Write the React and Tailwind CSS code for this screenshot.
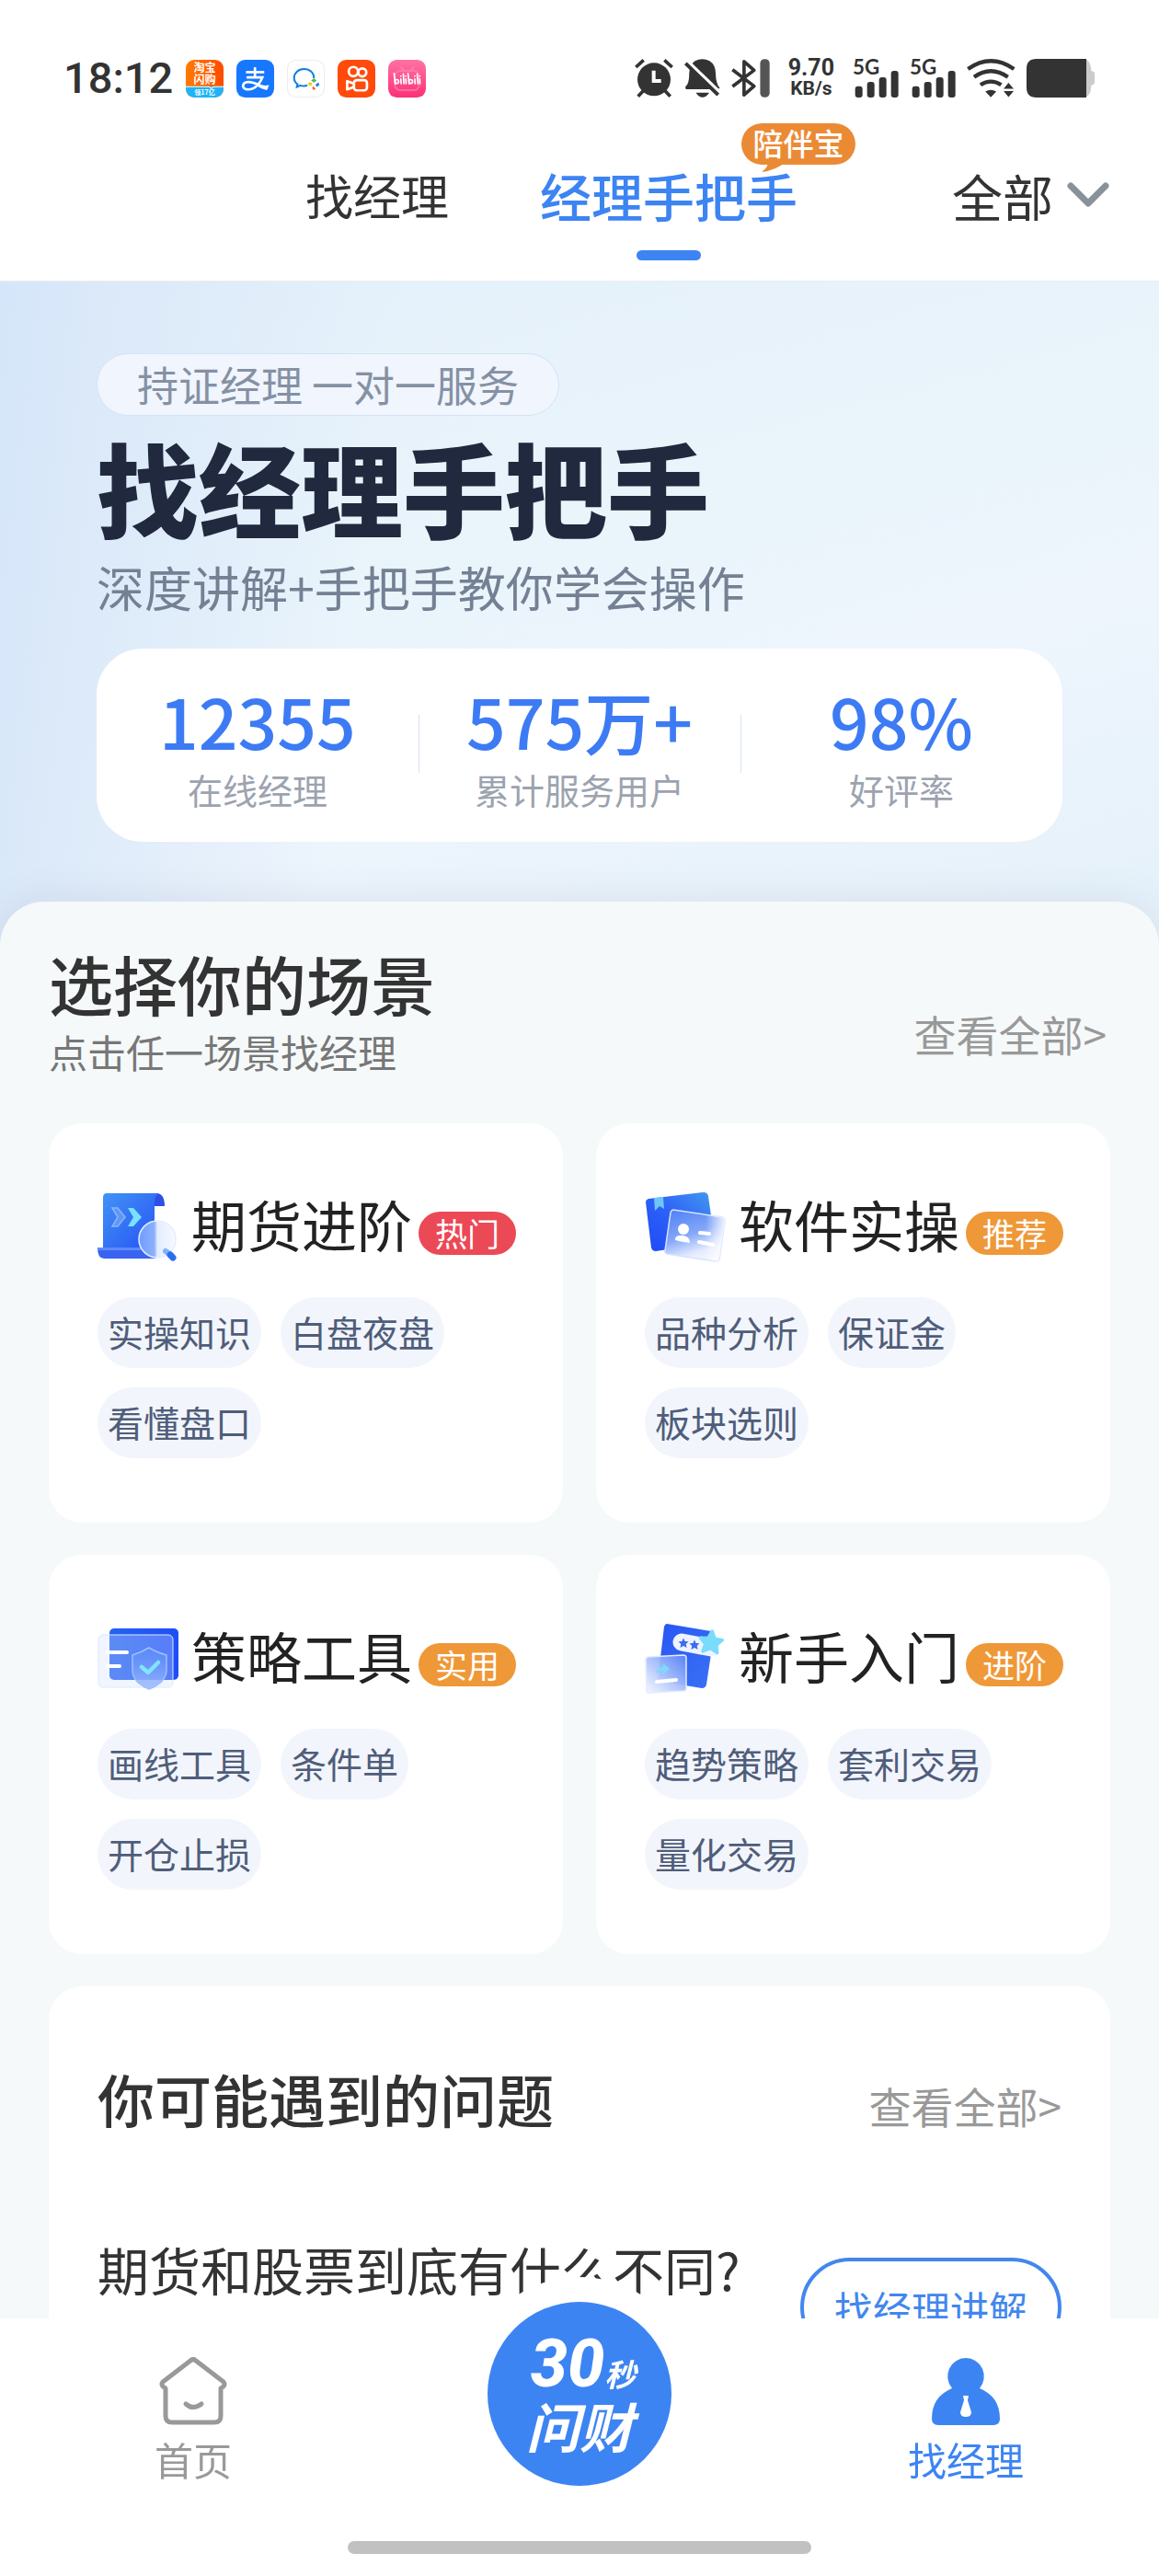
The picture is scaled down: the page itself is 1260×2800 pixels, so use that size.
import React from "react";

const DARK = "#333333";
const BLUE = "#3d84f3";

/* ---------- status bar ---------- */

function TaobaoIcon() {
  return (
    <svg viewBox="0 0 122 122" className="size-[41px]" aria-label="淘宝闪购">
      <defs>
        <linearGradient id="tb" x1="0" x2="1">
          <stop offset="0" stopColor="#ff7a00" />
          <stop offset="1" stopColor="#ff4a00" />
        </linearGradient>
        <clipPath id="tbc">
          <rect width="122" height="122" rx="28" />
        </clipPath>
      </defs>
      <g clipPath="url(#tbc)">
        <rect width="122" height="122" fill="url(#tb)" />
        <rect y="86" width="122" height="36" fill="#1fb4f8" />
        <path d="M0 87H76l7 6 7-6H122" stroke="#fff" strokeWidth="3" fill="none" />
      </g>
      <g fill="#fff" fontFamily="Noto Sans CJK SC, sans-serif" fontWeight="700" textAnchor="middle">
        <text x="61" y="40" fontSize="36">淘宝</text>
        <text x="61" y="76" fontSize="36">闪购</text>
        <text x="61" y="113" fontSize="21">领17亿</text>
      </g>
    </svg>
  );
}

function AlipayIcon() {
  return (
    <svg viewBox="0 0 122 122" className="size-[41px]" aria-label="支付宝">
      <rect width="122" height="122" rx="28" fill="#1677ff" />
      <g fill="none" stroke="#fff" strokeLinecap="round">
        <path d="M31 40H90" strokeWidth="8" strokeLinecap="butt" />
        <path d="M60 24V58" strokeWidth="8" strokeLinecap="butt" />
        <path d="M36 57H84C78 74 62 96 38 96C14 96 18 73 38 72C60 71 76 86 98 92" strokeWidth="8" />
      </g>
      <path d="M66 76Q84 86 106 82L98 98Q82 96 66 84Z" fill="#fff" />
    </svg>
  );
}

function WeComIcon() {
  return (
    <svg viewBox="0 0 122 122" className="size-[41px]" aria-label="企业微信">
      <rect x="1.5" y="1.5" width="119" height="119" rx="27" fill="#fff" stroke="#ececec" strokeWidth="3" />
      <path d="M87 60C88 41 73 30 55 30C36 30 23 43 23 59C23 68 28 75 34 79L32 88L43 83C53 86 60 85 66 82" fill="none" stroke="#0d7fe0" strokeWidth="6" />
      <path d="M87 60l9 7-9 7-9-7z" fill="#4fb848" />
      <path d="M102 73l3 9-9 6-4-8z" fill="#1485ee" />
      <path d="M87 86l6 10-9 1-3-8z" fill="#f4622c" />
      <path d="M74 72l8 4-4 9-12-6z" fill="#f9c41f" />
    </svg>
  );
}

function KuaishouIcon() {
  return (
    <svg viewBox="0 0 122 122" className="size-[41px]" aria-label="快手">
      <rect width="122" height="122" rx="28" fill="#ff4a0c" />
      <g fill="none" stroke="#fff" strokeWidth="8" strokeLinejoin="round">
        <circle cx="51" cy="38" r="15" />
        <circle cx="80" cy="41" r="13" />
        <rect x="53" y="66" width="42" height="33" rx="9" />
        <path d="M53 77L31 69V96L53 88" />
      </g>
    </svg>
  );
}

function BilibiliIcon() {
  return (
    <svg viewBox="0 0 122 122" className="size-[41px]" aria-label="bilibili">
      <defs>
        <linearGradient id="bl" x2="0" y2="1">
          <stop offset="0" stopColor="#ff72a3" />
          <stop offset="1" stopColor="#fc3177" />
        </linearGradient>
      </defs>
      <rect width="122" height="122" rx="28" fill="url(#bl)" />
      <g fill="none" stroke="#ff8bb4" strokeWidth="6" opacity=".6" strokeLinecap="round">
        <rect x="22" y="36" width="78" height="62" rx="16" />
        <path d="M42 24l10 11M82 24L72 35" />
      </g>
      <g fill="none" stroke="#fff" strokeWidth="5" strokeLinecap="round">
        <path d="M19 44l4 34M64 44l4 34" />
        <circle cx="28" cy="70" r="6" />
        <circle cx="73" cy="70" r="6" />
        <path d="M41 62l1 15M49 46l2 31M57 62l1 15M86 62l1 15M94 46l2 31M102 62l1 15M41 52v1M57 52v1M86 52v1M102 52v1" />
      </g>
    </svg>
  );
}

function AlarmIcon() {
  return (
    <svg viewBox="30 42 126 126" className="size-[42px]" aria-label="闹钟">
      <g stroke={DARK} strokeWidth="11">
        <path d="M34 69L59 46M152 69L127 46M41 164L60 144M146 164L127 144" />
      </g>
      <circle cx="93" cy="109" r="54" fill={DARK} />
      <path d="M92 80V114H116" fill="none" stroke="#fff" strokeWidth="12" />
    </svg>
  );
}

function BellOffIcon() {
  return (
    <svg viewBox="195 42 118 126" className="h-[42px] w-[39px]" aria-label="静音">
      <path d="M202 141Q196 139 200 131Q211 122 211 88Q212 60 230 48Q254 36 278 48Q297 60 298 88Q298 122 312 138L300 141Z" fill={DARK} />
      <path d="M233 153H277Q267 168 255 168Q242 168 233 153Z" fill={DARK} />
      <path d="M203 48L313 154" stroke="#fff" strokeWidth="13" />
      <path d="M199 56L306 160" stroke={DARK} strokeWidth="12" />
    </svg>
  );
}

function BluetoothIcon() {
  return (
    <svg viewBox="345 42 127 126" className="h-[42px] w-[42px]" aria-label="蓝牙">
      <path d="M349 77L420 131L387 160V50L420 79L349 132" fill="none" stroke={DARK} strokeWidth="11" strokeLinejoin="round" />
      <rect x="440" y="42" width="31" height="126" rx="14" fill="#555" />
    </svg>
  );
}

function SignalIcon() {
  return (
    <svg viewBox="740 42 150 126" className="h-[42px] w-[50px] overflow-visible" aria-label="5G">
      <text x="740" y="92" fontSize="67" fontWeight="700" fontFamily="Lato, sans-serif" fill={DARK}>5G</text>
      <g fill={DARK}>
        <rect x="748" y="131" width="24" height="37" rx="9" />
        <rect x="787" y="117" width="24" height="51" rx="9" />
        <rect x="826" y="102" width="24" height="66" rx="9" />
        <rect x="865" y="81" width="24" height="87" rx="9" />
      </g>
    </svg>
  );
}

function WifiIcon() {
  return (
    <svg viewBox="1116 42 160 126" className="h-[42px] w-[53px]" aria-label="Wi-Fi">
      <g fill="none" stroke={DARK} strokeWidth="13">
        <path d="M1120 75Q1195 22 1271 75" />
        <path d="M1140 101Q1195 62 1251 101" />
        <path d="M1161 127Q1195 105 1229 127" />
      </g>
      <path d="M1177 149Q1195 138 1213 149L1195 168Z" fill={DARK} />
      <path d="M1237 140L1253 120L1270 140ZM1237 147H1270L1253 167Z" fill={DARK} />
    </svg>
  );
}

function BatteryIcon() {
  return (
    <svg viewBox="1308 42 222 126" className="h-[42px] w-[74px]" aria-label="电量">
      <path d="M1490 42Q1518 42 1519 82Q1530 82 1530 92V118Q1530 127 1519 128Q1518 168 1490 168Z" fill="#cbcbcb" />
      <path d="M1340 42H1503V168H1340Q1308 168 1308 136V74Q1308 42 1340 42Z" fill={DARK} />
    </svg>
  );
}

function StatusBar() {
  return (
    <div className="flex h-[42px] items-center pr-[70px] pl-[69px] text-[#333]">
      <time className="w-[133px] font-[Roboto] text-[47px] leading-[48px] font-medium">18:12</time>
      <div className="flex gap-[14px]">
        <TaobaoIcon />
        <AlipayIcon />
        <WeComIcon />
        <KuaishouIcon />
        <BilibiliIcon />
      </div>
      <div className="ml-auto flex gap-3">
        <AlarmIcon />
        <BellOffIcon />
        <BluetoothIcon />
        <div className="mx-2 flex h-[42px] flex-col items-center justify-center font-[Roboto] text-[25px] leading-[23px] font-bold">
          <span>9.70</span>
          <span className="text-[21px]">KB/s</span>
        </div>
        <SignalIcon />
        <SignalIcon />
        <WifiIcon />
        <BatteryIcon />
      </div>
    </div>
  );
}

/* ---------- header ---------- */

function Header() {
  return (
    <header className="shrink-0 border-b border-[#ebedf0] bg-white pt-16">
      <StatusBar />
      <div className="flex items-start pt-[78px] pr-[54px] pb-[22px] pl-[332px] leading-[56px]">
        <button type="button" className="text-[52px] text-[#333]">找经理</button>
        <button type="button" className="relative ml-[99px] flex flex-col items-center text-[56px] font-medium text-[#3d84f3]">
          经理手把手
          <span className="mt-8 h-[11px] w-[70px] rounded-full bg-[#3d84f3]" />
          <span className="absolute -top-[50px] left-[219px] h-[45px] w-[124px] rounded-full bg-[#eb8a35] text-center text-[33px] leading-[42px] text-white">
            陪伴宝
            <svg viewBox="0 0 28 12" className="absolute top-[42px] left-5 h-3 w-7" aria-hidden="true">
              <path d="M9 0H28Q18 9 2 11Q9 6 9 0Z" fill="#eb8a35" />
            </svg>
          </span>
        </button>
        <label className="ml-auto flex items-center gap-[14px] text-[55px] text-[#333]">
          <select aria-label="筛选" className="h-[56px] appearance-none bg-transparent">
            <option>全部</option>
          </select>
          <svg viewBox="0 0 46 28" className="h-7 w-[46px]" aria-hidden="true">
            <path d="M4 4L23 23L42 4" fill="none" stroke="#8b919a" strokeWidth="7" strokeLinecap="round" strokeLinejoin="round" />
          </svg>
        </label>
      </div>
    </header>
  );
}

/* ---------- hero ---------- */

const stats = [
  ["12355", "在线经理"],
  ["575万+", "累计服务用户"],
  ["98%", "好评率"],
];

function Hero() {
  return (
    <section className="bg-[linear-gradient(97deg,#d5e6fa_0%,#dbe9f9_8%,rgba(232,243,251,0)_32%),linear-gradient(165deg,#e4f0fa_0%,#e9f4fb_40%,#eef5fd_62%,#e4f1fa_100%)] px-[105px] pt-[78px] pb-[113px]">
      <p className="inline-block rounded-full border border-[#d5e4f3] bg-[#f0f5fe] px-[43px] text-[45px] leading-[66px] text-[#8591a3]">
        持证经理 一对一服务
      </p>
      <h1 className="mt-[22px] text-[111px] leading-[110px] font-black text-[#20293d]">找经理手把手</h1>
      <p className="mt-7 text-[52px] leading-[52px] text-[#748093]">深度讲解+手把手教你学会操作</p>
      <dl className="mt-[41px] grid grid-cols-3 rounded-[50px] bg-white pt-10 pb-[38px] text-center">
        {stats.map(([value, label], i) => (
          <div key={label} className="relative flex flex-col-reverse">
            {i > 0 && <span className="absolute top-8 left-0 h-[63px] w-px bg-[#d8e3ee]" />}
            <dt className="mt-[18px] text-[38px] leading-[38px] text-[#9ca3af]">{label}</dt>
            <dd className="text-[75px] leading-[76px] font-medium text-[#3d7bf5]">{value}</dd>
          </div>
        ))}
      </dl>
    </section>
  );
}

/* ---------- scene icons ---------- */

function ScrollIcon() {
  return (
    <svg viewBox="0 0 88 76" className="h-[76px] w-[88px] shrink-0" aria-hidden="true">
      <defs>
        <linearGradient id="s1" x1="0" y1="0" x2="1" y2="1">
          <stop offset="0" stopColor="#4393f5" />
          <stop offset="1" stopColor="#2450f5" />
        </linearGradient>
        <linearGradient id="s2" x1="0" x2="1">
          <stop offset="0" stopColor="#6f9dfb" />
          <stop offset=".42" stopColor="#8cb0fc" />
          <stop offset=".5" stopColor="#e3edff" />
          <stop offset="1" stopColor="#f7faff" />
        </linearGradient>
      </defs>
      <path d="M60 1H65Q73 2 73 15H62Z" fill="#2c4fe6" />
      <path d="M10 1H66Q62 5 62 12V64H6V6Q6 1 10 1Z" fill="url(#s1)" />
      <path d="M0 60H56Q58 68 64 72H7Q0 72 0 60Z" fill="#3a63f2" />
      <path d="M0 60H56L57 63H0Z" fill="#5d8afb" />
      <path d="M16 17H22L30 27L22 37H16L22 27Z" fill="#5f97f8" stroke="#8bb4fb" strokeWidth="1.5" />
      <path d="M33 17H39L48 27L39 37H33L39 27Z" fill="#78e2fd" />
      <circle cx="65" cy="51" r="20" fill="url(#s2)" stroke="#e6eeff" strokeWidth="1.5" />
      <path d="M74 64L80 68" stroke="#7fb2f8" strokeWidth="6" strokeLinecap="round" />
      <path d="M79 68L82 71" stroke="#2c6df0" strokeWidth="7" strokeLinecap="round" />
    </svg>
  );
}

function CardsIcon() {
  return (
    <svg viewBox="0 0 88 76" className="h-[76px] w-[88px] shrink-0" aria-hidden="true">
      <defs>
        <linearGradient id="c1" x1="0" y1="1" x2="1" y2="0">
          <stop offset="0" stopColor="#2049f6" />
          <stop offset=".5" stopColor="#2c62f7" />
          <stop offset="1" stopColor="#469af0" />
        </linearGradient>
        <linearGradient id="c2" x1=".3" y1="0" x2=".7" y2="1">
          <stop offset="0" stopColor="#5486f5" />
          <stop offset=".45" stopColor="#85a7f9" />
          <stop offset=".8" stopColor="#e5ecff" />
          <stop offset="1" stopColor="#f7f9ff" />
        </linearGradient>
        <linearGradient id="c3" x1="0" x2="1">
          <stop offset=".68" stopColor="#fff" stopOpacity="0" />
          <stop offset="1" stopColor="#fff" stopOpacity=".85" />
        </linearGradient>
      </defs>
      <path d="M4 7L64 0Q68 0 69 4L76 54L12 64Q8 64 7 60L1 11Q1 8 4 7Z" fill="url(#c1)" />
      <path d="M10 6L20 5L21 18L16 15L11 20Z" fill="#6cc6f5" />
      <path d="M31 19L84 27Q87 28 87 31L81 73Q80 75 77 75L24 67Q21 66 22 63L28 22Q29 19 31 19Z" fill="url(#c2)" stroke="#d6e2ff" strokeWidth="1.5" />
      <path d="M31 19L84 27Q87 28 87 31L81 73Q80 75 77 75L24 67Q21 66 22 63L28 22Q29 19 31 19Z" fill="url(#c3)" />
      <circle cx="42" cy="40" r="6" fill="#fff" />
      <path d="M33 50Q35 46 42 47Q49 48 49 55Q40 54 33 52Z" fill="#fff" />
      <path d="M60 44L70 45M59 54L74 57" stroke="#fff" strokeWidth="4" strokeLinecap="round" />
    </svg>
  );
}

function ShieldIcon() {
  return (
    <svg viewBox="0 -5 88 76" className="h-[76px] w-[88px] shrink-0" aria-hidden="true">
      <defs>
        <linearGradient id="h1" x1="0" x2="1">
          <stop offset="0" stopColor="#2563f0" />
          <stop offset="1" stopColor="#1f4df8" />
        </linearGradient>
        <linearGradient id="h2" y1="0" x2="0" y2="1">
          <stop offset="0" stopColor="#5c8ff8" stopOpacity=".5" />
          <stop offset="1" stopColor="#9bb9ff" stopOpacity=".9" />
        </linearGradient>
      </defs>
      <rect x="13" width="75" height="56" rx="5" fill="url(#h1)" />
      <rect x="1" y="7" width="81" height="57" rx="5" fill="#cfdfff" fillOpacity=".32" stroke="#dce8ff" />
      <path d="M56 21Q64 26 75 29V47Q74 59 56 66Q39 59 38 47V29Q48 26 56 21Z" fill="url(#h2)" stroke="#9cc0fc" strokeWidth="1.5" />
      <path d="M11 26H32M11 41H24" stroke="#fff" strokeWidth="4" strokeLinecap="round" />
      <path d="M48 42L55 48L66 37" fill="none" stroke="#7fe5ff" strokeWidth="4.5" strokeLinecap="round" strokeLinejoin="round" />
    </svg>
  );
}

const STAR = "M0-10L3-3.5L10-3L5 2L6.500 9L0 5.500L-6.500 9L-5 2L-10-3L-3-3.500Z";

function StarsIcon() {
  return (
    <svg viewBox="0 0 88 76" className="h-[76px] w-[88px] shrink-0" aria-hidden="true">
      <defs>
        <linearGradient id="t1" x1="0" y1="0" x2="1" y2="1">
          <stop offset="0" stopColor="#2955f4" />
          <stop offset="1" stopColor="#3a72f5" />
        </linearGradient>
        <linearGradient id="t2" x1="1" y1="0" x2="0" y2="1">
          <stop offset="0" stopColor="#5b84f5" />
          <stop offset=".5" stopColor="#a9c0fc" />
          <stop offset="1" stopColor="#f5f8ff" />
        </linearGradient>
      </defs>
      <path d="M24 0L72 8Q76 9 75 13L67 66Q66 70 62 70L14 62L21 3Q22 0 24 0Z" fill="url(#t1)" />
      <path d="M40 20L72 26" stroke="#eef3ff" strokeWidth="19" strokeLinecap="round" />
      <path d={STAR} transform="translate(42 21) scale(.55)" fill="#3d6cf0" />
      <path d={STAR} transform="translate(54 23) scale(.55)" fill="#3d6cf0" />
      <path d={STAR} transform="translate(72 20) rotate(6) scale(1.2)" fill="#7adcfc" stroke="#7adcfc" strokeLinejoin="round" strokeWidth="3" />
      <path d="M4 36L42 34Q45 34 45 37V71Q45 73 42 73L5 75Q2 75 2 72L1 39Q1 36 4 36Z" fill="url(#t2)" fillOpacity=".94" stroke="#e3ebff" strokeWidth="1.5" />
      <path d="M12 54Q13 47 20 47V43L27 49L20 55V51Q16 51 12 54Z" fill="#79dcfc" />
      <path d="M13 63L34 61" stroke="#fff" strokeWidth="4" strokeLinecap="round" />
    </svg>
  );
}

/* ---------- scenes ---------- */

const scenes = [
  { title: "期货进阶", badge: "热门", hot: true, Icon: ScrollIcon, tags: ["实操知识", "白盘夜盘", "看懂盘口"] },
  { title: "软件实操", badge: "推荐", Icon: CardsIcon, tags: ["品种分析", "保证金", "板块选则"] },
  { title: "策略工具", badge: "实用", Icon: ShieldIcon, tags: ["画线工具", "条件单", "开仓止损"] },
  { title: "新手入门", badge: "进阶", Icon: StarsIcon, tags: ["趋势策略", "套利交易", "量化交易"] },
];

function SceneCard({ title, badge, hot, Icon, tags }) {
  return (
    <article className="rounded-[36px] bg-white px-[53px] pt-[69px] pb-[70px]">
      <div className="flex h-[88px] items-center">
        <Icon />
        <h3 className="mb-2 ml-[14px] text-[60px] leading-[66px] whitespace-nowrap text-[#222]">{title}</h3>
        <span
          className={
            "mt-3 ml-[7px] h-[47px] rounded-full px-[18px] text-[35px] leading-[46px] whitespace-nowrap text-white " +
            (hot ? "bg-[#eb4956]" : "bg-[#ef9838]")
          }
        >
          {badge}
        </span>
      </div>
      <div className="mt-8 flex flex-wrap gap-[21px]">
        {tags.map((t) => (
          <button key={t} type="button" className="h-[77px] rounded-full bg-[#f2f5fb] px-[11px] pb-0.5 text-[39px] text-[#4f5d7a]">
            {t}
          </button>
        ))}
      </div>
    </article>
  );
}

function ViewAll() {
  return (
    <a href="#all" className="text-[46px] leading-[46px] text-[#999]">
      查看全部&gt;
    </a>
  );
}

function Scenes() {
  return (
    <section>
      <div className="flex items-end justify-between">
        <div>
          <h2 className="pt-0.5 text-[70px] leading-[70px] font-medium text-[#333]">选择你的场景</h2>
          <p className="mt-[18px] text-[42px] leading-[42px] text-[#777]">点击任一场景找经理</p>
        </div>
        <div className="flex pr-1 pb-[18px]">
          <ViewAll />
        </div>
      </div>
      <div className="mt-[57px] grid grid-cols-2 gap-x-9 gap-y-[35px]">
        {scenes.map((s) => (
          <SceneCard key={s.title} {...s} />
        ))}
      </div>
    </section>
  );
}

function Questions() {
  return (
    <section className="mt-[35px] rounded-[36px] bg-white px-[53px] pt-[91px] pb-24">
      <div className="flex items-end justify-between">
        <h2 className="text-[62px] leading-[63px] font-medium text-[#333]">你可能遇到的问题</h2>
        <div className="flex pb-0.5">
          <ViewAll />
        </div>
      </div>
      <div className="mt-[125px] flex items-start justify-between">
        <p className="text-[56px] leading-[56px] text-[#333]">期货和股票到底有什么不同?</p>
        <button type="button" className="mt-4 h-[108px] rounded-full border-4 border-[#4287ee] px-[33px] text-[42px] text-[#4287ee]">
          找经理讲解
        </button>
      </div>
    </section>
  );
}

/* ---------- bottom navigation ---------- */

function BottomNav() {
  return (
    <nav className="relative z-10 shrink-0 bg-white pb-6">
      <div className="grid grid-cols-3 justify-items-center text-[42px] leading-[42px]">
        <a href="#home" className="mt-[42px] flex flex-col items-center gap-4 text-[#999]">
          <svg viewBox="0 0 74 74" className="size-[74px]" aria-hidden="true">
            <g fill="none" stroke="#999" strokeWidth="5" strokeLinecap="round" strokeLinejoin="round">
              <path d="M7 34Q1 31 4 27L34 4Q37 1 40 4L70 27Q73 31 67 34V64Q67 71 60 71H14Q7 71 7 64Z" />
              <path d="M29 51Q37 58 46 51" />
            </g>
          </svg>
          首页
        </a>
        <button
          type="button"
          className="-mt-[18px] flex size-[200px] flex-col items-center rounded-full bg-[#3d84f3] pt-[40px] font-bold text-white italic shadow-[0_0_0_27px_white]"
        >
          <span className="flex items-baseline pl-2 text-[34px] leading-[56px]">
            <span className="font-[Roboto] text-[72px] font-extrabold">30</span>秒
          </span>
          <span className="text-[58px] leading-[56px]">问财</span>
        </button>
        <a href="#manager" className="mt-[42px] flex flex-col items-center gap-4 text-[#3d84f3]">
          <svg viewBox="0 0 74 74" className="size-[74px]" aria-hidden="true">
            <path d="M37 1A20 20 0 0 1 52 34Q74 43 74 67Q74 74 67 74H7Q0 74 0 67Q0 43 22 34A20 20 0 0 1 37 1Z" fill={BLUE} />
            <path d="M34 42H40L39 47L43 60Q43 65 37 65Q31 65 31 60L35 47Z" fill="#fff" />
          </svg>
          找经理
        </a>
      </div>
      <div className="mx-auto mt-[60px] h-[14px] w-2/5 rounded-full bg-[#c1c1c1]" />
    </nav>
  );
}

export default function App() {
  return (
    <div className="flex h-screen flex-col overflow-hidden bg-white font-['Noto_Sans_CJK_SC',sans-serif]" lang="zh-CN">
      <Header />
      <main className="min-h-0 flex-1 overflow-y-auto bg-[#f5f9fa] [scrollbar-width:none]">
        <Hero />
        <div className="relative -mt-12 rounded-t-[48px] bg-[#f5f9fa] px-[53px] pt-[52px] pb-14 shadow-[0_-4px_40px_rgba(90,90,110,0.1)]">
          <Scenes />
          <Questions />
        </div>
      </main>
      <BottomNav />
    </div>
  );
}
